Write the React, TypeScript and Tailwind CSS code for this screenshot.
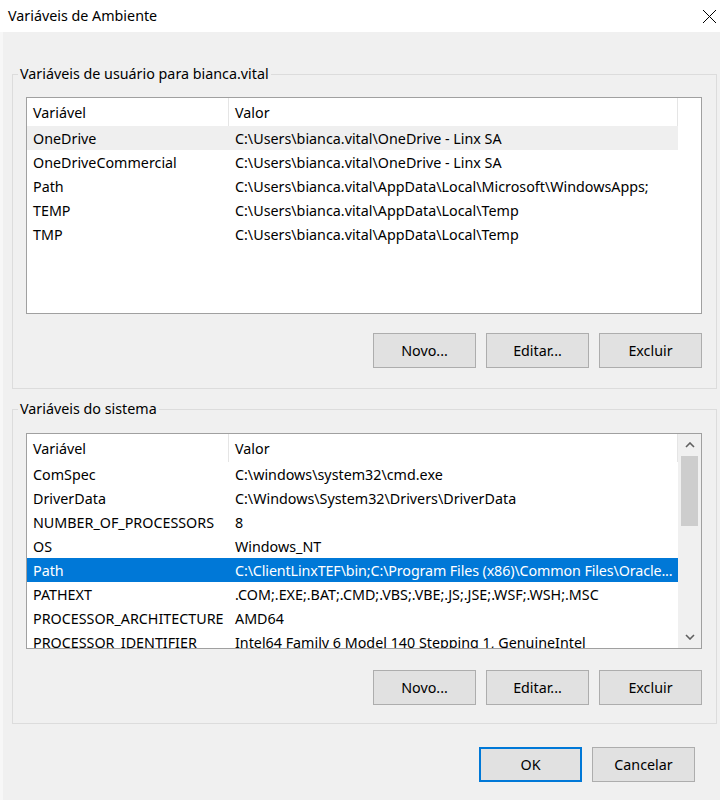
import React from 'react';

type Row = { name: string; value: string; tight?: boolean };

const userVars: Row[] = [
  { name: 'OneDrive', value: 'C:\\Users\\bianca.vital\\OneDrive - Linx SA' },
  { name: 'OneDriveCommercial', value: 'C:\\Users\\bianca.vital\\OneDrive - Linx SA' },
  { name: 'Path', value: 'C:\\Users\\bianca.vital\\AppData\\Local\\Microsoft\\WindowsApps;' },
  { name: 'TEMP', value: 'C:\\Users\\bianca.vital\\AppData\\Local\\Temp' },
  { name: 'TMP', value: 'C:\\Users\\bianca.vital\\AppData\\Local\\Temp' },
];

const systemVars: Row[] = [
  { name: 'ComSpec', value: 'C:\\windows\\system32\\cmd.exe' },
  { name: 'DriverData', value: 'C:\\Windows\\System32\\Drivers\\DriverData' },
  { name: 'NUMBER_OF_PROCESSORS', value: '8' },
  { name: 'OS', value: 'Windows_NT' },
  { name: 'Path', value: 'C:\\ClientLinxTEF\\bin;C:\\Program Files (x86)\\Common Files\\Oracle...', tight: true },
  { name: 'PATHEXT', value: '.COM;.EXE;.BAT;.CMD;.VBS;.VBE;.JS;.JSE;.WSF;.WSH;.MSC' },
  { name: 'PROCESSOR_ARCHITECTURE', value: 'AMD64' },
  { name: 'PROCESSOR_IDENTIFIER', value: 'Intel64 Family 6 Model 140 Stepping 1, GenuineIntel' },
];

function WinButton({ label, primary }: { label: string; primary?: boolean }) {
  return (
    <button
      className={
        primary
          ? 'w-[103px] h-[35px] bg-[#e1e1e1] border border-[#0078d7] shadow-[inset_0_0_0_1px_#0078d7] text-black'
          : 'w-[103px] h-[35px] bg-[#e1e1e1] border border-[#adadad] text-black'
      }
    >
      {label}
    </button>
  );
}

function Chevron({ down }: { down?: boolean }) {
  return (
    <svg width="10" height="6" viewBox="0 0 10 6" className={down ? 'rotate-180' : ''}>
      <path d="M1 5 L5 1 L9 5" fill="none" stroke="#606060" strokeWidth="1.6" />
    </svg>
  );
}

function ListView({
  rows,
  height,
  selected,
  hover,
  scroll,
}: {
  rows: Row[];
  height: string;
  selected?: number;
  hover?: number;
  scroll?: boolean;
}) {
  return (
    <div className={`${height} bg-white border border-[#a0a0a0] flex overflow-hidden`}>
      <div className="w-[651px] shrink-0 flex flex-col">
        <div className="h-[28px] flex shrink-0">
          <div className="w-[202px] pl-[6px] pt-[1px] flex items-center border-r border-[#e5e5e5]">Variável</div>
          <div className="w-[449px] pl-[6px] pt-[1px] flex items-center border-r border-[#e5e5e5]">Valor</div>
        </div>
        {rows.map((r, i) => (
          <div
            key={r.name}
            className={
              i === selected
                ? 'h-[24px] shrink-0 flex bg-[#0078d7] text-white'
                : i === hover
                ? 'h-[24px] shrink-0 flex bg-[#efefef]'
                : 'h-[24px] shrink-0 flex'
            }
          >
            <div className="w-[202px] pl-[6px] pt-[1px] flex items-center whitespace-nowrap overflow-hidden">{r.name}</div>
            <div
              className={
                r.tight
                  ? 'w-[449px] pl-[6px] pt-[1px] flex items-center whitespace-nowrap overflow-hidden tracking-[-0.12px]'
                  : 'w-[449px] pl-[6px] pt-[1px] flex items-center whitespace-nowrap overflow-hidden'
              }
            >
              {r.value}
            </div>
          </div>
        ))}
      </div>
      {scroll && (
        <div className="ml-auto w-[23px] shrink-0 bg-[#f0f0f0] flex flex-col">
          <div className="h-[22px] flex items-center justify-center">
            <Chevron />
          </div>
          <div className="mx-[3px] h-[70px] bg-[#cdcdcd]" />
          <div className="flex-1" />
          <div className="h-[22px] flex items-center justify-center">
            <Chevron down />
          </div>
        </div>
      )}
    </div>
  );
}

function Group({ title, children, className }: { title: string; children: React.ReactNode; className: string }) {
  return (
    <fieldset className={`min-w-0 border border-[#dcdcdc] ml-[9px] mr-[3px] ${className}`}>
      <legend className="ml-[5px] px-[2px] leading-[20px]">{title}</legend>
      {children}
    </fieldset>
  );
}

export default function App() {
  return (
    <div className="w-[720px] h-[800px] flex flex-col bg-white text-[14.3px] text-black font-['Noto_Sans',sans-serif] overflow-hidden">
      <div className="h-[32px] shrink-0 flex items-center justify-between pl-[8px] pr-[3px]">
        <span>Variáveis de Ambiente</span>
        <svg width="15" height="15" viewBox="0 0 15 15">
          <path d="M1 1 L14 14 M14 1 L1 14" stroke="#000" strokeWidth="1" />
        </svg>
      </div>
      <div className="flex-1 bg-[#f0f0f0] border-l-[3px] border-[#f7f7f7] flex flex-col">
        <Group title="Variáveis de usuário para bianca.vital" className="mt-[32px]">
          <div className="pl-[13px] pr-[14px] pt-[13px] pb-[20px]">
            <ListView rows={userVars} height="h-[217px]" hover={0} />
            <div className="mt-[19px] flex justify-end gap-[10px]">
              <WinButton label="Novo..." />
              <WinButton label="Editar..." />
              <WinButton label="Excluir" />
            </div>
          </div>
        </Group>
        <Group title="Variáveis do sistema" className="mt-[10px]">
          <div className="pl-[13px] pr-[14px] pt-[14px] pb-[18px]">
            <ListView rows={systemVars} height="h-[216px]" selected={4} scroll />
            <div className="mt-[21px] flex justify-end gap-[10px]">
              <WinButton label="Novo..." />
              <WinButton label="Editar..." />
              <WinButton label="Excluir" />
            </div>
          </div>
        </Group>
        <div className="mt-[23px] pr-[25px] flex justify-end gap-[10px]">
          <WinButton label="OK" primary />
          <WinButton label="Cancelar" />
        </div>
      </div>
    </div>
  );
}
